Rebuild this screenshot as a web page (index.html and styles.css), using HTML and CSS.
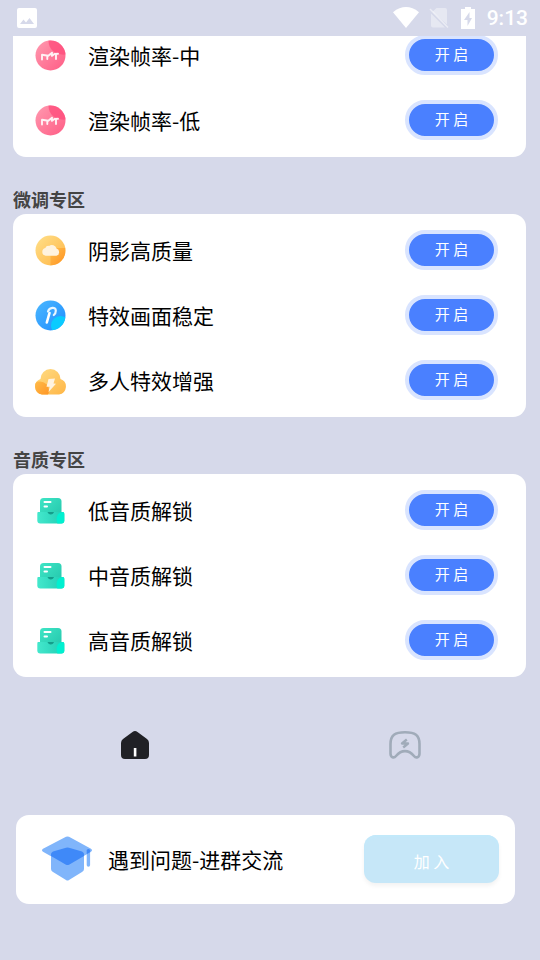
FILE: index.html
```
<!DOCTYPE html>
<html lang="zh-CN">
<head>
<meta charset="utf-8">
<meta name="viewport" content="width=device-width, initial-scale=1">
<title>微调专区</title>
<link rel="stylesheet" href="styles.css">
</head>
<body>
<svg class="defs" aria-hidden="true">
  <defs>
    <linearGradient id="pink" x1="0" y1="0" x2="1" y2="1"><stop offset="0" stop-color="#ff9ab0"/><stop offset="1" stop-color="#ff5c85"/></linearGradient>
    <linearGradient id="amber" x1="0" y1="0" x2="1" y2="1"><stop offset="0" stop-color="#ffe08a"/><stop offset="1" stop-color="#ffb545"/></linearGradient>
    <linearGradient id="orange" x1="0" y1="0" x2="1" y2="1"><stop offset="0" stop-color="#ffc04e"/><stop offset="1" stop-color="#ff9020"/></linearGradient>
    <linearGradient id="blue" x1="0" y1="0" x2="1" y2="1"><stop offset="0" stop-color="#4cb8ff"/><stop offset="1" stop-color="#1e8cff"/></linearGradient>
    <linearGradient id="mint" x1="0" y1="0" x2="1" y2="1"><stop offset="0" stop-color="#3fe6c6"/><stop offset="1" stop-color="#22c4aa"/></linearGradient>
    <linearGradient id="tray" x1="0" y1="0" x2="1" y2="0"><stop offset="0" stop-color="#44e8cc"/><stop offset="1" stop-color="#20cdb4"/></linearGradient>
    <clipPath id="disc"><circle cx="17.500" cy="17.500" r="15"/></clipPath>
    <clipPath id="puff"><path d="M9 31.500a8 8 0 0 1-1.500-15.500 9.800 9.800 0 1 1 20 0A8 8 0 0 1 26 31.500z"/></clipPath>
  </defs>
  <symbol id="frame" viewBox="0 0 34 34">
    <circle cx="17.500" cy="17.500" r="15" fill="url(#pink)"/>
    <path d="M15.500 2.600a15 15 0 0 1 17 14C23.500 17.500 15.500 12.500 15.500 2.600z" fill="#ff4f7d" opacity=".8"/>
    <path d="M9 21.500v-4.800l6.300 1 3.700-3-.2 3.200 2.700-2 3.500-.2M14.300 18v3M23 16.500v4.500" fill="none" stroke="#fff1f4" stroke-width="1.900" stroke-linecap="round" stroke-linejoin="round"/>
  </symbol>
  <symbol id="cloud" viewBox="0 0 34 34">
    <circle cx="17.500" cy="17.500" r="15" fill="url(#amber)"/>
    <path d="M17.500 15h15v17.500h-15z" fill="url(#orange)" clip-path="url(#disc)"/>
    <path d="M12.500 22.700a4 4 0 0 1-.2-7.800 3.500 3.500 0 0 1 3.700-2 4.800 4.800 0 0 1 7.500 2.700 3.700 3.700 0 0 1 0 7.100z" fill="#fff3df"/>
  </symbol>
  <symbol id="effect" viewBox="0 0 34 34">
    <circle cx="17.500" cy="17.500" r="15" fill="url(#blue)"/>
    <circle cx="27.500" cy="27.500" r="9.500" fill="#0acbff" clip-path="url(#disc)"/>
    <path d="M13.800 24.500 16.500 15" stroke="#fff" stroke-width="2.600" stroke-linecap="round"/>
    <path d="M15 13.500c1.500-4.500 7.800-5 7.800-.8 0 1.700-.8 3.300-2 4.300" fill="none" stroke="#e8f6ff" stroke-width="2.200" stroke-linecap="round"/>
  </symbol>
  <symbol id="storm" viewBox="0 0 34 34">
    <g clip-path="url(#puff)">
      <path d="M0 4h34v28H0z" fill="url(#amber)"/>
      <circle cx="7" cy="27.500" r="9" fill="url(#orange)"/>
    </g>
    <path d="m15.500 16 6.500-.5-1.500 5 2.500.3L15.500 29l1.200-5.200h-3.200z" fill="#fff3e0"/>
  </symbol>
  <symbol id="audio" viewBox="0 0 34 34">
    <rect x="7" y="5" width="21.500" height="22" rx="3.500" fill="url(#mint)"/>
    <path d="M5.500 19h24c1.500 0 1.800 1.200 1.800 3v5.500c0 2-1 3-3 3h-21c-2 0-3-1-3-3V21c0-1.500.2-2 1.200-2z" fill="url(#tray)"/>
    <path d="M14.500 19h6.500c-.5 1.500-1.500 2.500-3.200 2.500S15 20.500 14.500 19z" fill="#139e8b"/>
    <path d="M31.300 21v6.500c0 2-1 3-3 3h-4c-2-5 0-11 5-11.500 1.500 0 2 .5 2 2z" fill="#00f0d0"/>
    <path d="M11.500 9h6M11.500 13.500H14" stroke="#fff" stroke-width="2" stroke-linecap="round"/>
  </symbol>
</svg>

<header class="status">
  <svg class="status-photo" viewBox="0 0 20 20" width="20" height="20"><path fill-rule="evenodd" fill="#fff" d="M2 0h16a2 2 0 0 1 2 2v16a2 2 0 0 1-2 2H2a2 2 0 0 1-2-2V2a2 2 0 0 1 2-2zm1 16h14l-4.500-6-3.500 4.500-2.500-3z"/></svg>
  <div class="status-right">
    <svg viewBox="0 0 26 22" width="26" height="22"><path d="M0 5.200Q13-5 26 5.200L13 21z" fill="#fff"/></svg>
    <svg viewBox="0 0 20 22" width="20" height="22"><path d="M7.500 1H16q2 0 2 2v14.500L3.500 4.800zM2 6.500 16 20.500H4q-2 0-2-2z" fill="#fff" opacity=".4"/><path d="m1 2 18 18.500" stroke="#fff" stroke-opacity=".5" stroke-width="1.500"/></svg>
    <svg class="status-battery" viewBox="0 0 14 22" width="14" height="22"><path d="M4 0h6v2h4v20H0V2h4z" fill="#fff"/><path d="M8.500 5 3 13h3.500v6L11 11H8.500z" fill="#d6d9ea"/></svg>
    <span class="clock">9:13</span>
  </div>
</header>

<main class="scroll">
  <section class="card card-first">
    <div class="row"><svg class="icon"><use href="#frame"/></svg><span class="label" id="r1">渲染帧率-中</span><button class="open" aria-describedby="r1">开 启</button></div>
    <div class="row"><svg class="icon"><use href="#frame"/></svg><span class="label" id="r2">渲染帧率-低</span><button class="open" aria-describedby="r2">开 启</button></div>
  </section>

  <h2 class="title">微调专区</h2>
  <section class="card">
    <div class="row"><svg class="icon"><use href="#cloud"/></svg><span class="label" id="r3">阴影高质量</span><button class="open" aria-describedby="r3">开 启</button></div>
    <div class="row"><svg class="icon"><use href="#effect"/></svg><span class="label" id="r4">特效画面稳定</span><button class="open" aria-describedby="r4">开 启</button></div>
    <div class="row"><svg class="icon"><use href="#storm"/></svg><span class="label" id="r5">多人特效增强</span><button class="open" aria-describedby="r5">开 启</button></div>
  </section>

  <h2 class="title">音质专区</h2>
  <section class="card">
    <div class="row"><svg class="icon"><use href="#audio"/></svg><span class="label" id="r6">低音质解锁</span><button class="open" aria-describedby="r6">开 启</button></div>
    <div class="row"><svg class="icon"><use href="#audio"/></svg><span class="label" id="r7">中音质解锁</span><button class="open" aria-describedby="r7">开 启</button></div>
    <div class="row"><svg class="icon"><use href="#audio"/></svg><span class="label" id="r8">高音质解锁</span><button class="open" aria-describedby="r8">开 启</button></div>
  </section>
</main>

<nav class="tabs">
  <a class="tab" href="#home" aria-label="首页"><svg viewBox="0 0 36 36" width="36" height="36"><path d="M15.500 5q2.500-2 5 0l9.500 7q2 1.500 2 4v12q0 4-4 4H8q-4 0-4-4V16q0-2.500 2-4z" fill="#202126"/><path d="M16.800 21h2.600v8.500h-2.600z" fill="#fff"/></svg></a>
  <a class="tab" href="#game" aria-label="游戏"><svg viewBox="0 0 36 36" width="36" height="36" fill="none"><path d="M3.500 17C3.500 8 8 5.200 18 5.200S32.500 8 32.500 17v9.500c0 4-3.500 5-5.500 2.500-5.500-6.500-12.500-6.500-18 0-2 2.500-5.500 1.500-5.500-2.500z" stroke="#a0abb9" stroke-width="2.600" stroke-linejoin="round"/><path d="m19.800 12.500-4.800 4h6l-4.800 4" stroke="#a0abb9" stroke-width="2.400" stroke-linejoin="round"/></svg></a>
</nav>

<footer class="join">
  <svg class="cap" viewBox="0 0 52 46" width="52" height="46">
    <path d="M10 15h33v18q0 2-2 3L28 44q-1.500 1-3 0L12 36q-2-1-2-3z" fill="#80b5fb"/>
    <path d="M25 .8q1.500-.8 3 0l22 12q2 1.500 0 3L28 28.700q-1.500.8-3 0L2 15.800q-2-1.500 0-3z" fill="#80b5fb"/>
    <path d="M10 20v-2q0-1.500 2-2.500l13-3.700q1.500-.4 3 0L41 15.500q2 1 2 2.500v2L28 28.700q-1.500.8-3 0z" fill="#3f89f8"/>
    <path d="M47.400 15v14" stroke="#80b5fb" stroke-width="3.400" stroke-linecap="round"/>
    <path d="M45.700 14q1.700-2 3.400 0v2.300l-3.400 2z" fill="#3f89f8"/>
  </svg>
  <span class="label">遇到问题-进群交流</span>
  <button class="join-button">加 入</button>
</footer>
</body>
</html>
```
FILE: styles.css
```
* {
  box-sizing: border-box;
}

body {
  margin: 0;
  min-height: 100vh;
  background: #d6d9ea;
  color: #000;
  font-family: "Noto Sans CJK SC", sans-serif;
}

.defs {
  position: absolute;
  width: 0;
  height: 0;
}

.status {
  display: flex;
  align-items: center;
  justify-content: space-between;
  height: 36px;
  padding: 0 12px 0 17px;
}

.status-right {
  display: flex;
  align-items: center;
  gap: 10px;
}

.status-battery {
  margin: 0 2px;
}

.clock {
  color: #fff;
  font: 500 21px/24px Roboto, sans-serif;
}

.scroll {
  overflow: hidden;
  padding: 0 14px 0 13px;
}

.card {
  padding: 3px 0 5px;
  border-radius: 13px;
  background: #fff;
}

.card-first {
  margin-top: -17px;
}

.row {
  display: flex;
  align-items: center;
  height: 65px;
  padding: 0 28px 0 20px;
}

.icon {
  width: 34px;
  height: 34px;
  margin-right: 21px;
}

.label {
  flex: 1;
  font-size: 21px;
  line-height: 32px;
}

.open {
  width: 93px;
  height: 40px;
  padding: 0 0 2px;
  border: 4px solid #d9e4ff;
  border-radius: 20px;
  background: #4a80ff;
  color: #fff;
  font-family: inherit;
  font-size: 15px;
  line-height: 20px;
}

.title {
  margin: 0;
  padding-top: 28px;
  color: #444;
  font-size: 18px;
  font-weight: 700;
  line-height: 29px;
}

.tabs {
  display: grid;
  grid-template-columns: 1fr 1fr;
  margin-top: 50px;
}

.tab {
  display: flex;
  justify-content: center;
}

.join {
  display: flex;
  align-items: center;
  height: 89px;
  margin: 52px 25px 0 16px;
  padding: 0 16px 1px 25px;
  border-radius: 13px;
  background: #fff;
}

.cap {
  margin-right: 15px;
}

.join-button {
  width: 135px;
  height: 48px;
  padding: 4px 0 0;
  border: 0;
  border-radius: 12px;
  background: #c6e7f8;
  box-shadow: 0 3px 4px rgb(0 0 0 / 5%), inset 0 2px 3px #c2e9fb;
  color: #fff;
  font-family: inherit;
  font-size: 16px;
}
```
